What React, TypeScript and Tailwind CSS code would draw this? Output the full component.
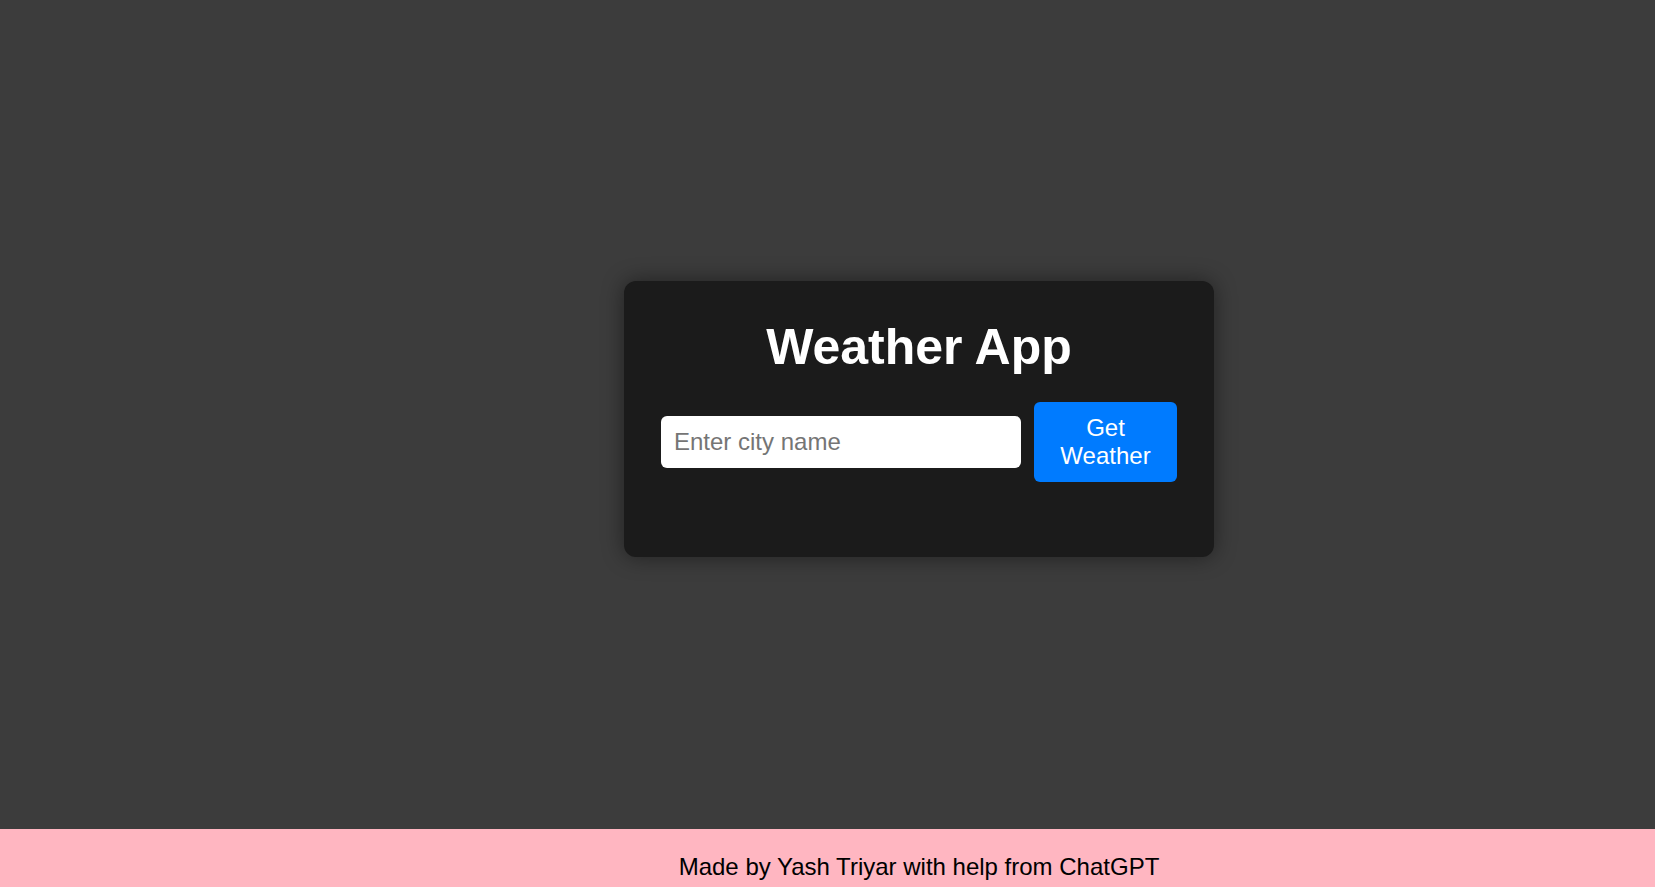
import React from "react";

export default function App() {
  return (
    <div className="h-[887px] overflow-hidden bg-[#3c3c3c] flex flex-col" style={{ fontFamily: '"Liberation Sans", Arial, sans-serif' }}>
      <main className="h-[829px] shrink-0 flex justify-center items-start pl-[183px] pt-[281px]">
        <div className="w-[590px] h-[276px] bg-[#1b1b1b] rounded-[12px] shadow-[0_0_22px_rgba(0,0,0,0.45)] px-[37px] pt-[38px] flex flex-col items-center">
          <h1 className="text-[50px] font-bold text-white leading-[57.5px]">Weather App</h1>
          <div className="mt-[25.5px] flex items-center gap-[13px] w-full">
            <input
              type="text"
              placeholder="Enter city name"
              className="w-[360px] h-[52px] bg-white rounded-[6px] px-[13px] text-[24px] text-black placeholder:text-[#757575] outline-none"
            />
            <button className="w-[143px] h-[80px] bg-[#007bff] rounded-[6px] text-white text-[24px] leading-[27.6px] flex flex-col items-center justify-center">
              <span>Get</span>
              <span>Weather</span>
            </button>
          </div>
        </div>
      </main>
      <footer className="h-[58px] shrink-0 overflow-hidden bg-[#ffb6c1] pt-[24px] pl-[183px] flex justify-center items-start">
        <p className="text-[24px] leading-[27.6px] text-black">Made by Yash Triyar with help from ChatGPT</p>
      </footer>
    </div>
  );
}
